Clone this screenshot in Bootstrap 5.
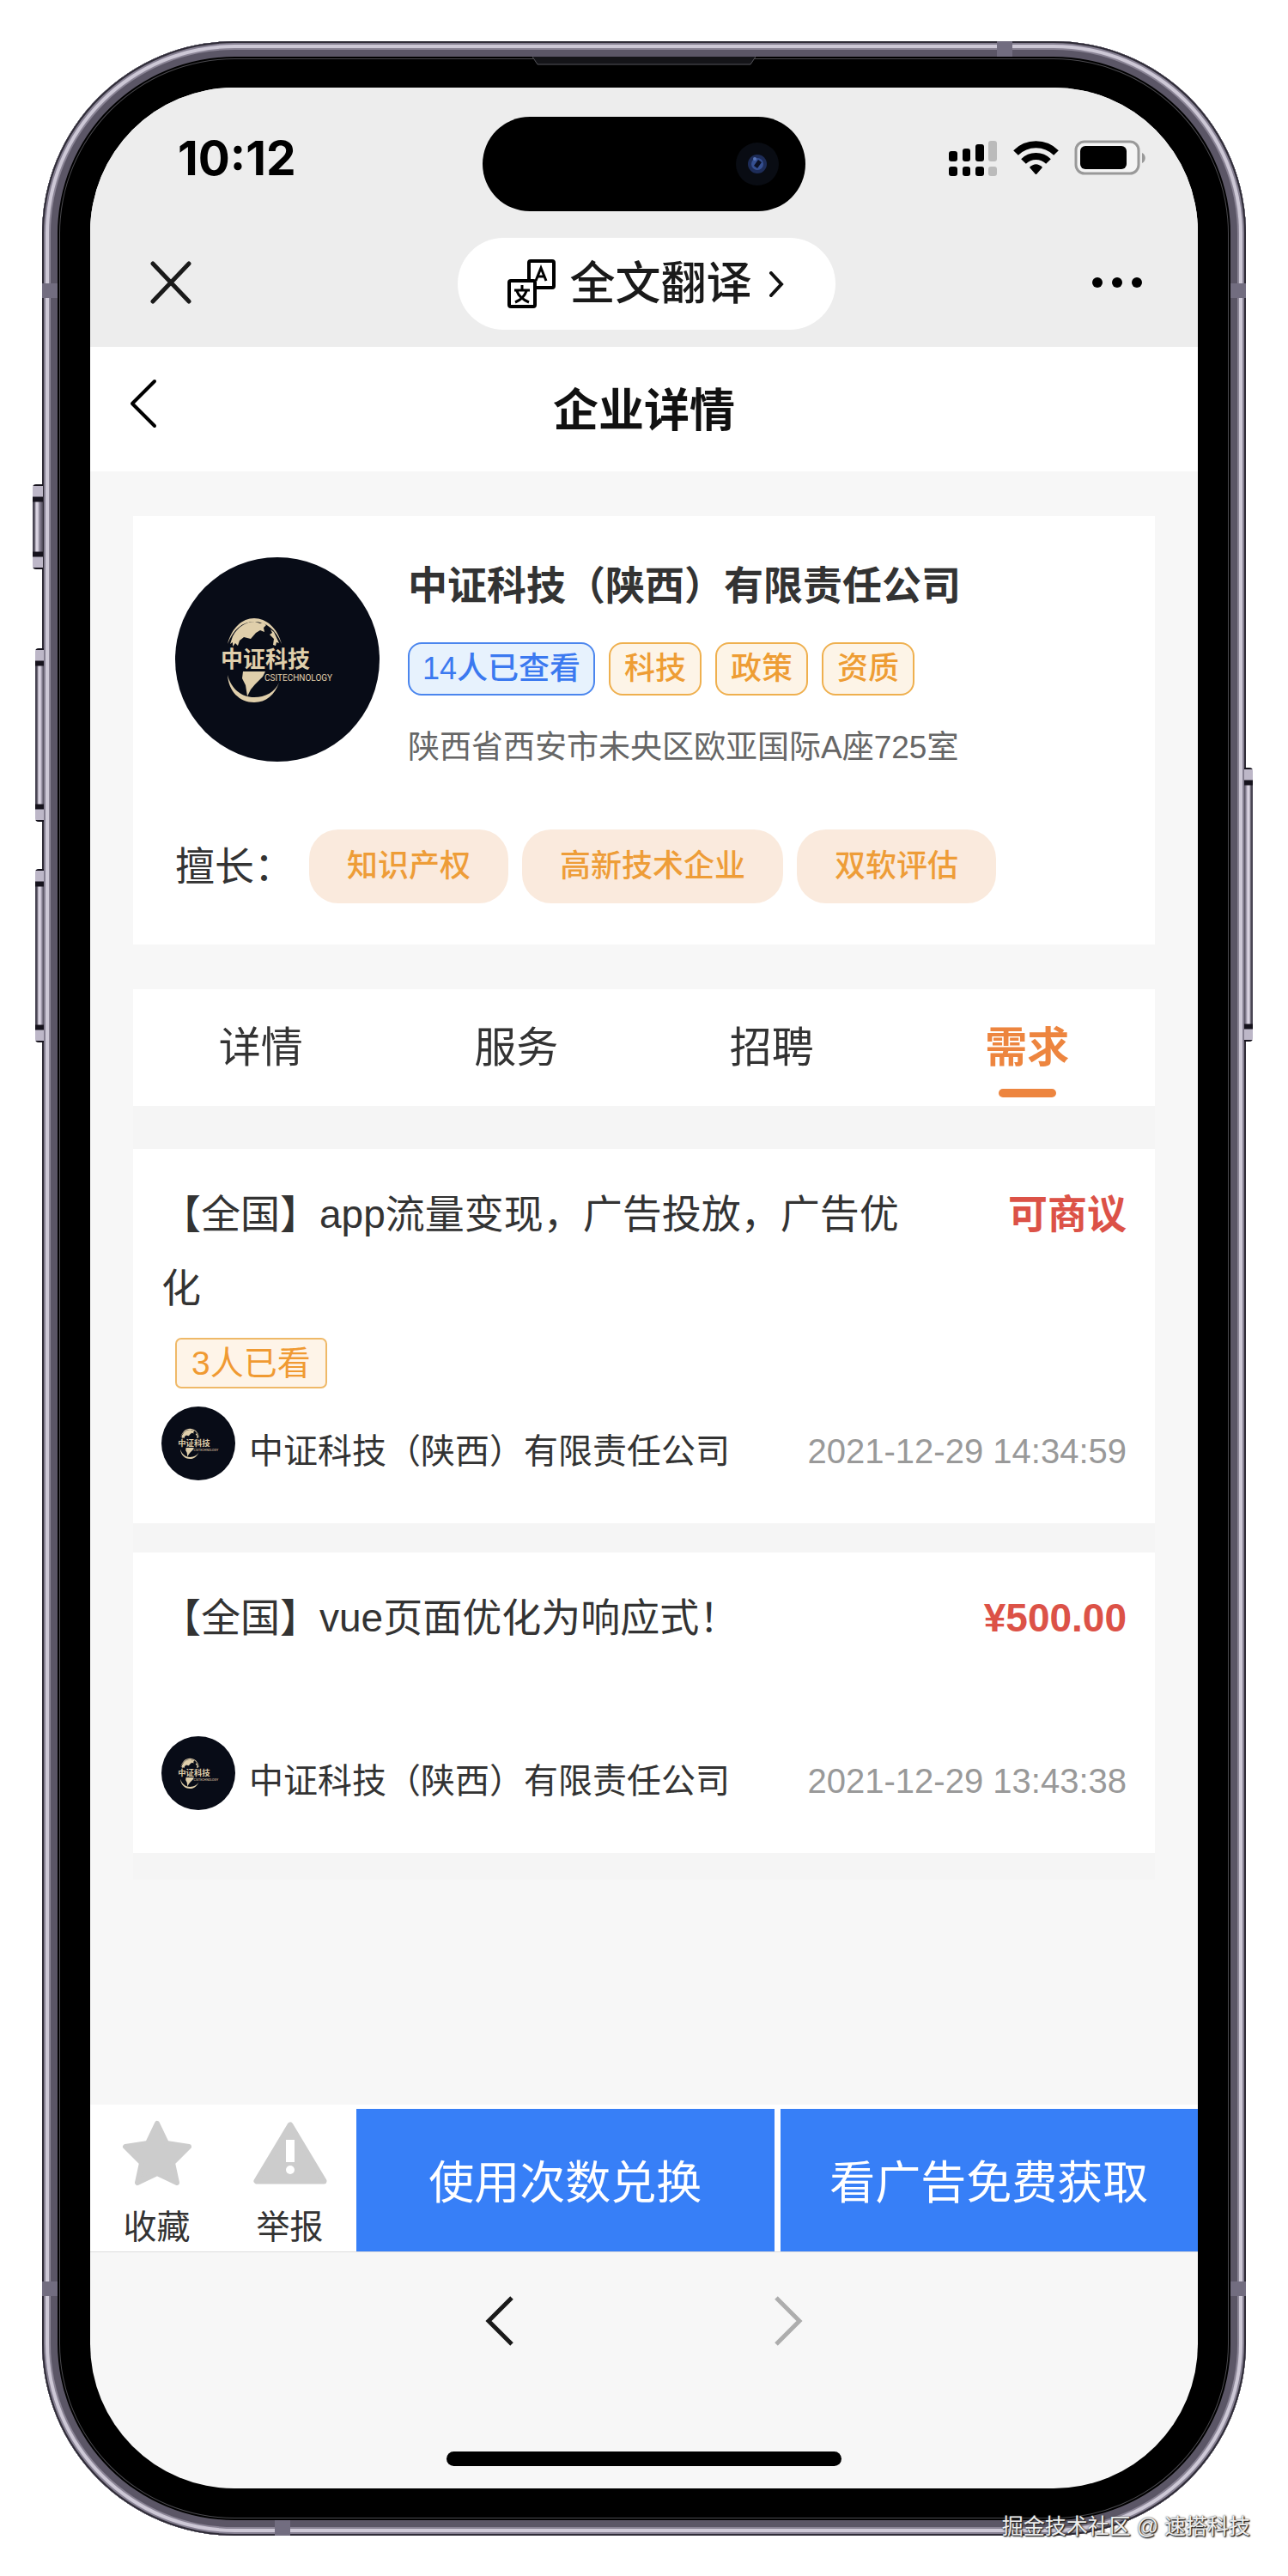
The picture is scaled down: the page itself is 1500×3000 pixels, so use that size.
<!DOCTYPE html>
<html lang="zh-CN">
<head>
<meta charset="utf-8">
<meta name="viewport" content="width=device-width, initial-scale=1">
<title>企业详情</title>
<link href="https://cdn.jsdelivr.net/npm/bootstrap@5.3.0/dist/css/bootstrap.min.css" rel="stylesheet">
<style>
  body { background: #fff; color: #333; font-family: "Liberation Sans", "Noto Sans CJK SC", sans-serif; line-height: 1.5; }
  button, a { font-family: inherit; }
  .icon-btn { padding: 0; border: 0; background: none; line-height: 0; color: #1a1a1a; }

  /* phone shell */
  .stage { padding: 48px 49px 47px; }
  .phone { padding: 54px 56px 55px; border-radius: 224px; background: #000;
    box-shadow: inset 0 0 0 2px #2f2c37, inset 0 0 0 4px #857f91, inset 0 0 0 8px #cdc8d6, inset 0 0 0 10px #8a8495, inset 0 0 0 18px #5b5666, inset 0 0 0 20px #000, inset 0 0 0 21px #4a494e; }
  .screen { border-radius: 168px; background: #f7f7f7; overflow: hidden; }
  .side-key { width: 10px; border-radius: 4px 0 0 4px; background: linear-gradient(#16131d 0 2px, #bdb7c8 2px 14px, #16131d 15px 20px, transparent 21px calc(100% - 21px), #16131d calc(100% - 20px) calc(100% - 15px), #bdb7c8 calc(100% - 14px) calc(100% - 2px), #16131d calc(100% - 2px)), linear-gradient(90deg, #4a4654 0 2px, #d8d2e0 4px 6px, #8c8698 8px, #4a4654); }
  .key-mute { left: -11px; top: 516px; height: 99px; width: 12px; }
  .key-up { left: -8px; top: 707px; height: 202px; }
  .key-down { left: -8px; top: 964px; height: 202px; }
  .key-power { right: -8px; top: 846px; height: 319px; transform: scaleX(-1); }
  .band { background: #726d80; }
  .band-side { width: 18px; height: 17px; }
  .band-edge { width: 18px; height: 18px; }
  .band-tl { left: 0; top: 282px; }
  .band-tr { right: 0; top: 282px; }
  .band-bl { left: 0; bottom: 279px; }
  .band-br { right: 0; bottom: 279px; }
  .band-top { right: 272px; top: 0; }
  .band-bottom { left: 271px; bottom: 0; }
  .speaker { top: 18px; width: 260px; height: 10px; }

  /* status bar and browser bar */
  .top-area { background: #ededed; padding: 34px 0 20px; }
  .status-row > .side { flex: 1 1 0; padding-bottom: 14px; }
  .clock { font: 700 55px/64px Inter, sans-serif; color: #000; padding-left: 102px; }
  .status-icons svg { margin-right: 61px; }
  .island { width: 376px; height: 110px; border-radius: 55px; background: #000; padding-right: 31px; }
  .browser-row { padding: 31px 65px 0 70px; }
  .browser-row > .side { flex: 1 1 0; padding-bottom: 4px; }
  .pill { height: 107px; border: 0; border-radius: 54px; background: #fff; color: #1a1a1a; font-size: 53px; line-height: 80px; padding: 0 57px; font-weight: 500; }
  .title-bar { height: 145px; background: #fff; padding: 0 44px; }
  .title-bar .side { width: 60px; padding-bottom: 14px; }
  .title-bar h1 { font-size: 53px; line-height: 80px; padding-top: 4px; color: #111; font-weight: 700; }

  /* company */
  .content { padding: 52px 50px 262px; }
  .panel { background: #fff; }
  .company { padding: 48px 48px 48px 49px; margin-bottom: 52px; }
  .logo-lg { width: 238px; height: 238px; }
  .logo-sm { width: 86px; height: 86px; }
  .company-info { padding-left: 33px; }
  .company-name { font-size: 46px; line-height: 66px; font-weight: 700; margin-bottom: 33px; color: #333; }
  .chip { font-size: 36px; line-height: 58px; border: 2px solid #efb04f; background: #fdf4e7; color: #ee9d34; border-radius: 16px; padding: 0 16px; font-weight: 500; }
  .chip-blue { border-color: #4b86ee; background: #e7f2fd; color: #3b79f0; padding: 0 15px; }
  .address { font-size: 37px; line-height: 54px; color: #666; margin: 34px 0 0; font-weight: 400; }
  .skills { margin-top: 68px; }
  .skills-label { font-size: 46px; line-height: 86px; width: 156px; white-space: nowrap; }
  .skill { font-size: 36px; line-height: 86px; border-radius: 34px; background: #faeadd; color: #ee9d38; padding: 0 44px; font-weight: 500; }

  /* tabs and demand list */
  .lists { background: #f5f5f5; padding-bottom: 31px; }
  .tabs { height: 136px; margin-bottom: 50px; }
  .tabs .nav-link { font-size: 49px; line-height: 74px; color: #333; padding: 31px 0 0; height: 136px; }
  .tabs .nav-link.active { color: #ed853f; font-weight: 700; }
  .tabs .active::after { content: ""; display: block; width: 67px; height: 10px; border-radius: 5px; background: #ed853f; margin: 11px auto 0; }
  .demand { padding: 33px 33px 50px; }
  .demand + .demand { margin-top: 34px; }
  .demand-title { font-size: 46px; line-height: 86px; width: 80%; margin: 0; font-weight: 400; }
  .price { font-size: 46px; line-height: 86px; color: #dc5247; font-weight: 700; }
  .viewed { height: 95px; padding: 15px 16px 0; }
  .view-tag { display: inline-block; font-size: 39px; line-height: 55px; border: 2px solid #efb968; border-radius: 7px; background: #fef4e8; color: #f09a32; padding: 0 17px; }
  .firm { font-size: 40px; line-height: 58px; padding: 17px 0 0 16px; }
  .when { font-size: 40px; line-height: 58px; padding-top: 17px; color: #999; }

  /* bottom actions */
  .actions { background: #fff; border-bottom: 1px solid #ddd; height: 172px; }
  .tool { width: 155px; border: 0; background: none; padding: 15px 0 0; font-size: 39px; line-height: 58px; color: #333; }
  .tool svg { display: block; margin: 0 auto 18px; }
  .cta { flex: 1 1 0; border: 0; border-radius: 0; background: #377ff7; color: #fff; font-size: 53px; margin-top: 5px; padding: 8px 0 0; }
  .cta + .cta { margin-left: 7px; }
  .browser-nav { padding: 50px 0 122px; gap: 302px; }
  .home-bar { width: 460px; height: 17px; border-radius: 9px; background: #000; margin: 0 auto 26px; }
  .credit { right: 44px; bottom: 39px; font-size: 25px; line-height: 38px; color: #eee; text-shadow: 1px 1px 1px #222, 0 0 2px #444, 1px 1px 2px #333; }
</style>
<script src="https://cdn.jsdelivr.net/npm/bootstrap@5.3.0/dist/js/bootstrap.bundle.min.js"></script>
</head>
<body>
<div class="stage position-relative">
  <div class="phone position-relative">
    <span class="side-key key-mute position-absolute"></span>
    <span class="side-key key-up position-absolute"></span>
    <span class="side-key key-down position-absolute"></span>
    <span class="side-key key-power position-absolute"></span>
    <span class="band band-side band-tl position-absolute"></span>
    <span class="band band-side band-tr position-absolute"></span>
    <span class="band band-side band-bl position-absolute"></span>
    <span class="band band-side band-br position-absolute"></span>
    <span class="band band-edge band-top position-absolute"></span>
    <span class="band band-edge band-bottom position-absolute"></span>
    <svg class="speaker position-absolute start-50 translate-middle-x" viewBox="0 0 260 10"><path d="M0 0l6 9h248l6-9" fill="#141418" stroke="#55555a"/></svg>

    <div class="screen">
      <header class="top-area">
        <div class="status-row d-flex align-items-center">
          <div class="side"><div class="clock">10:12</div></div>
          <div class="island d-flex align-items-center justify-content-end">
            <svg width="50" height="50" viewBox="0 0 50 50"><circle cx="25" cy="25" r="25" fill="#090c13"/><circle cx="25" cy="25" r="11" fill="#1d2c58"/><circle cx="25" cy="25" r="7" fill="#354f91"/><path d="M21 27l5-7 4 3-5 7Z" fill="#0b1024"/><circle cx="22" cy="19" r="2" fill="#5875b8"/></svg>
          </div>
          <div class="side status-icons d-flex justify-content-end align-items-center">
            <svg width="229" height="42" viewBox="0 0 229 42">
              <rect x="0" y="13" width="10" height="12" rx="3"/><rect x="16" y="10" width="9" height="15" rx="3"/><rect x="31" y="5" width="10" height="20" rx="3"/><rect x="46" y="1" width="10" height="24" rx="3" fill="#bbb"/>
              <rect x="0" y="31" width="10" height="11" rx="3"/><rect x="16" y="31" width="9" height="11" rx="3"/><rect x="31" y="31" width="10" height="11" rx="3"/><rect x="46" y="31" width="10" height="11" rx="3" fill="#bbb"/>
              <g fill="none" stroke="#000" stroke-width="8"><path d="M78 15c13-13 34-13 47 0"/><path d="M87 25c8-8 21-8 29 0"/></g>
              <path d="M94 32c5-5 10-5 15 0l-7 8h-1Z"/>
              <rect x="148" y="2" width="73" height="37" rx="10" fill="#f4f4f4" stroke="#999" stroke-width="3"/><rect x="153" y="7" width="54" height="27" rx="6"/><path d="M225 15c5 2 5 10 0 12Z" fill="#999"/>
            </svg>
          </div>
        </div>
        <div class="browser-row d-flex align-items-center">
          <div class="side"><button class="icon-btn" type="button" aria-label="关闭"><svg width="48" height="50" viewBox="0 0 48 50"><path d="M3 3l42 44M45 3L3 47" stroke="currentColor" stroke-width="5" stroke-linecap="round"/></svg></button></div>
          <button class="pill d-flex align-items-center" type="button">
            <svg class="me-3" width="58" height="58" viewBox="0 0 58 58" fill="none" stroke="#000" stroke-width="4">
              <path d="M26 24V4q0-2 2-2h25q2 0 2 2v27q0 2-2 2H34"/><rect x="3" y="25" width="30" height="30" rx="2"/>
              <path d="M34 25l6-15 6 15M36 20h8" stroke-width="3"/><path d="M18 30v5M9 36h18M12 37c2 6 7 10 14 13M23 37c-2 6-6 10-13 13" stroke-width="3"/>
            </svg>全文翻译<svg class="ms-3" width="24" height="30" viewBox="0 0 24 30"><path d="M6 2l12 13L6 28" fill="none" stroke="#111" stroke-width="4" stroke-linecap="round"/></svg>
          </button>
          <div class="side text-end"><button class="icon-btn" type="button" aria-label="更多"><svg width="60" height="14" viewBox="0 0 60 14"><circle cx="8" cy="7" r="6"/><circle cx="31" cy="7" r="6"/><circle cx="54" cy="7" r="6"/></svg></button></div>
        </div>
      </header>

      <div class="title-bar d-flex align-items-center justify-content-between">
        <div class="side"><button class="icon-btn" type="button" aria-label="返回"><svg width="34" height="58" viewBox="0 0 34 58"><path d="M31 3L5 29l26 26" fill="none" stroke="#000" stroke-width="4" stroke-linecap="round" stroke-linejoin="round"/></svg></button></div>
        <h1 class="m-0">企业详情</h1>
        <div class="side"></div>
      </div>

      <main class="content">
        <section class="company panel">
          <div class="d-flex">
            <svg class="logo-lg flex-shrink-0" viewBox="0 0 238 238" role="img" aria-label="中证科技">
              <g id="firm-logo">
                <circle cx="119" cy="119" r="119" fill="#080c17"/>
                <g fill="#e0cfab">
                  <path d="M61 101C66 82 78 71 92 71s27 11 32 30C117 84 106 75 92 75S68 84 61 101Z"/>
                  <path d="M67 92C73 81 82 75 93 75l6 2 3-1 4 3-3 3 1 5-5-2-5 3-6 7-8-2-5 4-2 6-3-3-3 4 0-5-3 2Z"/>
                  <path d="M111 84l4 3 6 13-3-1-1 4-3-1 1-7-5-5 3-2Z"/>
                  <path d="M79 133h26l-3 6-9 9-5 6-4 8-2-13-4-8Z"/>
                  <path d="M61 137c4 16 16 26 31 26 13 0 24-6 29-17-5 14-15 23-29 23-17 0-30-13-31-32Z"/>
                  <text x="53" y="128" font-size="26" font-weight="700" font-family="Noto Sans CJK SC, sans-serif">中证科技</text>
                  <text x="104" y="144" font-size="10" font-family="Roboto, sans-serif">CSITECHNOLOGY</text>
                </g>
              </g>
            </svg>
            <div class="company-info">
              <h2 class="company-name">中证科技（陕西）有限责任公司</h2>
              <div class="d-flex gap-3">
                <span class="chip chip-blue">14人已查看</span><span class="chip">科技</span><span class="chip">政策</span><span class="chip">资质</span>
              </div>
              <p class="address">陕西省西安市未央区欧亚国际A座725室</p>
            </div>
          </div>
          <div class="skills d-flex">
            <span class="skills-label">擅长：</span>
            <div class="d-flex gap-3"><span class="skill">知识产权</span><span class="skill">高新技术企业</span><span class="skill">双软评估</span></div>
          </div>
        </section>

        <div class="lists">
          <ul class="tabs panel nav nav-fill flex-nowrap">
            <li class="nav-item col-3"><a class="nav-link" href="#">详情</a></li>
            <li class="nav-item col-3"><a class="nav-link" href="#">服务</a></li>
            <li class="nav-item col-3"><a class="nav-link" href="#">招聘</a></li>
            <li class="nav-item col-3"><a class="nav-link active" aria-current="page" href="#">需求</a></li>
          </ul>

          <article class="demand panel">
            <div class="d-flex justify-content-between">
              <h3 class="demand-title">【全国】app流量变现，广告投放，广告优化</h3>
              <span class="price">可商议</span>
            </div>
            <div class="viewed"><span class="view-tag">3人已看</span></div>
            <div class="d-flex align-items-center">
              <svg class="logo-sm flex-shrink-0" viewBox="0 0 238 238" role="img" aria-label="中证科技"><use href="#firm-logo"/></svg>
              <span class="firm">中证科技（陕西）有限责任公司</span>
              <time class="when ms-auto">2021-12-29 14:34:59</time>
            </div>
          </article>

          <article class="demand panel">
            <div class="d-flex justify-content-between">
              <h3 class="demand-title">【全国】vue页面优化为响应式！</h3>
              <span class="price">¥500.00</span>
            </div>
            <div class="viewed"></div>
            <div class="d-flex align-items-center">
              <svg class="logo-sm flex-shrink-0" viewBox="0 0 238 238" role="img" aria-label="中证科技"><use href="#firm-logo"/></svg>
              <span class="firm">中证科技（陕西）有限责任公司</span>
              <time class="when ms-auto">2021-12-29 13:43:38</time>
            </div>
          </article>
        </div>
      </main>

      <div class="actions d-flex">
        <button class="tool" type="button"><svg width="86" height="81" viewBox="0 0 86 81"><path d="M43 7l11 23 26 4-19 19 5 23-23-11-23 11 5-23L6 34l26-4Z" fill="#ccc" stroke="#ccc" stroke-width="6" stroke-linejoin="round"/></svg>收藏</button>
        <button class="tool" type="button"><svg width="86" height="81" viewBox="0 0 86 81"><path d="M43 9L4 74h78Z" fill="#ccc" stroke="#ccc" stroke-width="7" stroke-linejoin="round"/><path d="M38 26h10v26H38Z" fill="#fff"/><circle cx="43" cy="61" r="5" fill="#fff"/></svg>举报</button>
        <button class="cta" type="button">使用次数兑换</button>
        <button class="cta" type="button">看广告免费获取</button>
      </div>

      <div class="browser-nav d-flex justify-content-center">
        <button class="icon-btn" type="button" aria-label="后退"><svg width="34" height="60" viewBox="0 0 34 60"><path d="M31 3L4 30l27 27" fill="none" stroke="#1a1a1a" stroke-width="5"/></svg></button>
        <button class="icon-btn" type="button" aria-label="前进"><svg width="34" height="60" viewBox="0 0 34 60"><path d="M3 3l27 27L3 57" fill="none" stroke="#adadad" stroke-width="5"/></svg></button>
      </div>
      <div class="home-bar"></div>
    </div>
  </div>
  <div class="credit position-absolute">掘金技术社区 @ 速搭科技</div>
</div>
</body>
</html>
